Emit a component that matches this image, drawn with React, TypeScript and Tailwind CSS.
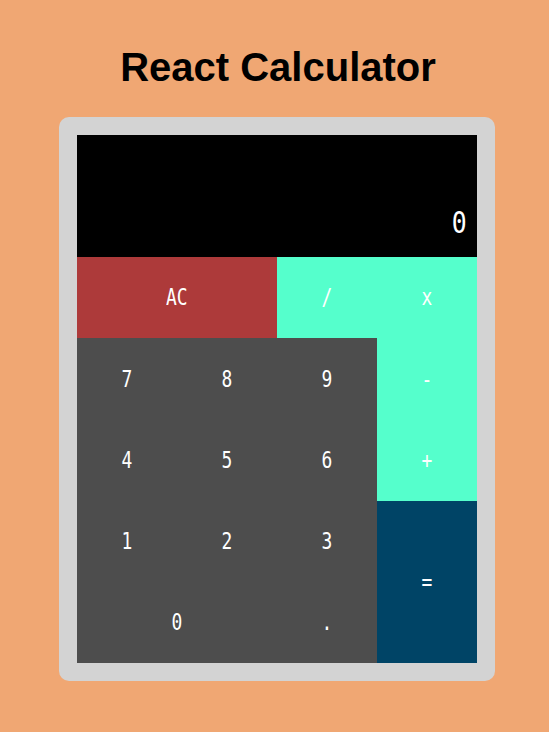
import { useState } from 'react';

const keys = [
  { label: 'AC', cls: 'col-span-2 bg-[#ad3a3a]' },
  { label: '/', cls: 'bg-[#55ffcc]' },
  { label: 'x', cls: 'bg-[#55ffcc]' },
  { label: '7', cls: 'bg-[#4d4d4d]' },
  { label: '8', cls: 'bg-[#4d4d4d]' },
  { label: '9', cls: 'bg-[#4d4d4d]' },
  { label: '-', cls: 'bg-[#55ffcc]' },
  { label: '4', cls: 'bg-[#4d4d4d]' },
  { label: '5', cls: 'bg-[#4d4d4d]' },
  { label: '6', cls: 'bg-[#4d4d4d]' },
  { label: '+', cls: 'bg-[#55ffcc]' },
  { label: '1', cls: 'bg-[#4d4d4d]' },
  { label: '2', cls: 'bg-[#4d4d4d]' },
  { label: '3', cls: 'bg-[#4d4d4d]' },
  { label: '=', cls: 'row-span-2 bg-[#004466]' },
  { label: '0', cls: 'col-span-2 bg-[#4d4d4d]' },
  { label: '.', cls: 'bg-[#4d4d4d]' },
];

export default function App() {
  const [display] = useState('0');

  return (
    <div className="min-h-[732px] w-full bg-[#f0a773] flex flex-col items-center pl-[4px]">
      <h1 className="mt-[44px] mb-[27px] ml-[3px] text-[40px] leading-[46px] font-bold text-black font-['Liberation_Sans',Arial,sans-serif]">
        React Calculator
      </h1>

      <div className="bg-[#d3d3d3] rounded-[10px] p-[18px]">
        <div className="grid grid-cols-[repeat(4,100px)] grid-rows-[122px_repeat(5,81.2px)] font-['DejaVu_Sans_Mono',monospace] text-white">
          <div className="col-span-4 bg-black flex items-end justify-end pr-[10px] pb-[19px] text-[31px] leading-none">
            <span className="inline-block scale-x-[0.8] origin-right">{display}</span>
          </div>
          {keys.map((k) => (
            <button
              key={k.label}
              className={`${k.cls} flex items-center justify-center text-[23px] text-white`}
            >
              <span className="inline-block scale-x-[0.78]">{k.label}</span>
            </button>
          ))}
        </div>
      </div>
    </div>
  );
}
